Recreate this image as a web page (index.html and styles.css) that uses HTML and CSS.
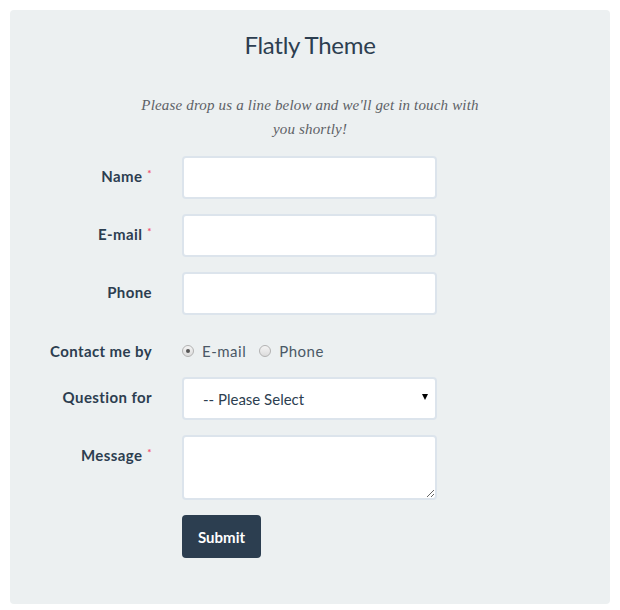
FILE: index.html
```html
<!DOCTYPE html>
<html lang="en">
<head>
<meta charset="utf-8">
<title>Flatly Theme</title>
<link rel="stylesheet" href="styles.css">
</head>
<body>
<div class="panel">
  <h1 class="title">Flatly Theme</h1>
  <p class="intro">Please drop us a line below and we'll get in touch with you shortly!</p>
  <form class="form">
    <label class="label">Name <span class="req">*</span></label>
    <div class="field"><input class="control" type="text"></div>

    <label class="label">E-mail <span class="req">*</span></label>
    <div class="field"><input class="control" type="text"></div>

    <label class="label">Phone</label>
    <div class="field"><input class="control" type="text"></div>

    <label class="label label-radio">Contact me by</label>
    <div class="field radios">
      <span class="radio"><span class="dot checked"></span>E-mail</span>
      <span class="radio"><span class="dot"></span>Phone</span>
    </div>

    <label class="label">Question for</label>
    <div class="field">
      <div class="select"><span>-- Please Select</span><span class="caret"></span></div>
    </div>

    <label class="label">Message <span class="req">*</span></label>
    <div class="field"><textarea class="control area"></textarea></div>

    <div></div>
    <div class="field"><button class="btn" type="button">Submit</button></div>
  </form>
</div>
</body>
</html>
```
FILE: styles.css
```css
html, body {
  margin: 0;
  padding: 0;
  background: #ffffff;
}
body {
  padding: 10px 10px 0 10px;
  font-family: "Lato", "Liberation Sans", sans-serif;
  color: #2c3e50;
}
.panel {
  width: 600px;
  height: 594px;
  box-sizing: border-box;
  background: #ecf0f1;
  border-radius: 4px;
  padding-top: 20px;
}
.title {
  margin: 0;
  text-align: center;
  font-weight: 400;
  font-size: 24px;
  line-height: 30px;
  letter-spacing: -0.3px;
  color: #2c3e50;
}
.intro {
  margin: 33px auto 0;
  width: 350px;
  text-align: center;
  font-family: "Liberation Serif", "DejaVu Serif", serif;
  font-style: italic;
  font-size: 15px;
  line-height: 24px;
  letter-spacing: 0.17px;
  color: #5d6166;
}
.form {
  margin-top: 15px;
  display: grid;
  grid-template-columns: 142px 255px;
  column-gap: 30px;
  row-gap: 15px;
}
.label {
  text-align: right;
  font-family: "Lato", sans-serif;
  font-weight: 700;
  font-size: 15px;
  line-height: 20px;
  padding-top: 10px;
  color: #2c3e50;
  letter-spacing: 0.4px;
}
.label-radio {
  padding-top: 11px;
}
.req {
  color: #f0506e;
  font-size: 10px;
  line-height: 0;
  vertical-align: 5px;
  margin-left: 1px;
}
.control {
  display: block;
  width: 255px;
  height: 43px;
  box-sizing: border-box;
  border: 2px solid #dce4ec;
  border-radius: 4px;
  background: #ffffff;
  font-family: "Lato", sans-serif;
  font-size: 15px;
  margin: 0;
}
.area {
  height: 65px;
  resize: vertical;
}
.radios {
  display: flex;
  align-items: center;
  height: 32px;
  gap: 13px;
  padding-top: 10px;
  box-sizing: border-box;
  font-family: "Lato", sans-serif;
  font-size: 15px;
  line-height: 20px;
  letter-spacing: 0.5px;
  color: #4a5866;
}
.radio {
  display: flex;
  align-items: center;
  gap: 8px;
}
.dot {
  width: 10px;
  height: 10px;
  border-radius: 50%;
  border: 1px solid #b2b2b2;
  background: linear-gradient(#f4f4f4, #dcdcdc);
  display: flex;
  align-items: center;
  justify-content: center;
}
.dot.checked::after {
  content: "";
  width: 4px;
  height: 4px;
  border-radius: 50%;
  background: #555555;
}
.select {
  height: 43px;
  box-sizing: border-box;
  border: 2px solid #dce4ec;
  border-radius: 4px;
  background: #ffffff;
  display: flex;
  align-items: center;
  justify-content: space-between;
  padding: 0 7px 0 19px;
  font-size: 15px;
  color: #2c3e50;
}
.caret {
  width: 0;
  height: 0;
  border-left: 3.5px solid transparent;
  border-right: 3.5px solid transparent;
  border-top: 6px solid #000000;
  margin-top: -4px;
}
.btn {
  display: block;
  height: 43px;
  padding: 0 16px;
  background: #2c3e50;
  color: #ffffff;
  border: none;
  border-radius: 4px;
  font-family: "Lato", sans-serif;
  font-weight: 700;
  font-size: 15px;
}
```
